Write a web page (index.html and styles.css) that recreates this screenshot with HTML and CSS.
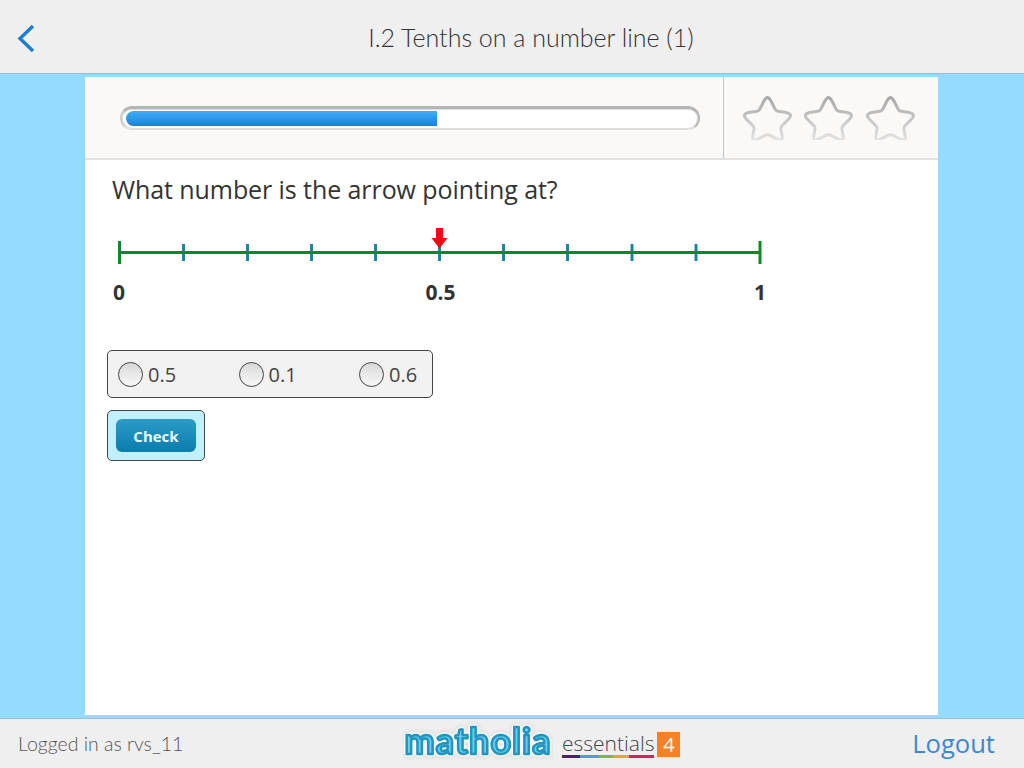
FILE: index.html
```html
<!DOCTYPE html>
<html lang="en">
<head>
    <meta charset="UTF-8">
    <title>I.2 Tenths on a number line (1)</title>
    <link rel="stylesheet" href="styles.css">
</head>
<body>

<header class="topbar">
    <svg class="back" width="20" height="30" viewBox="0 0 20 30">
        <path d="M17 3 L4 15.5 L17 28" fill="none" stroke="#1a7fd4" stroke-width="3.4"/>
    </svg>
    <h1 class="title">I.2 Tenths on a number line (1)</h1>
</header>

<main class="stage">
    <div class="card">
        <div class="status">
            <div class="progress-cell">
                <div class="progress"><div class="progress-fill"></div></div>
            </div>
            <div class="stars">
                <svg class="star" width="52" height="46" viewBox="0 0 52 46"><use href="#star-shape"/></svg>
                <svg class="star" width="52" height="46" viewBox="0 0 52 46"><use href="#star-shape"/></svg>
                <svg class="star" width="52" height="46" viewBox="0 0 52 46"><use href="#star-shape"/></svg>
            </div>
        </div>

        <div class="question">
            <p class="prompt">What number is the arrow pointing at?</p>

            <!-- number line: 0 to 1 in tenths -->
            <svg class="numberline" width="680" height="80" viewBox="0 0 680 80">
                <g stroke="#14899f" stroke-width="3">
                    <path d="M76.5 18v17M140.5 18v17M204.5 18v17M268.5 18v17M332.500 18v17M396.500 18v17M460.500 18v17M525 18v17M589 18v17"/>
                </g>
                <path d="M12.500 26.500H653" stroke="#0a8c22" stroke-width="3"/>
                <path d="M12.500 15v23M653 15v23" stroke="#0a8c22" stroke-width="3"/>
                <path d="M329 2h7v10h4.500l-8 10.500l-8-10.500h4.500z" fill="#ee0b14"/>
                <text class="tick-label" x="12" y="74" text-anchor="middle">0</text>
                <text class="tick-label" x="333.500" y="74" text-anchor="middle">0.5</text>
                <text class="tick-label" x="653" y="74" text-anchor="middle">1</text>
            </svg>

            <div class="choices">
                <label class="choice"><span class="radio"></span>0.5</label>
                <label class="choice"><span class="radio"></span>0.1</label>
                <label class="choice"><span class="radio"></span>0.6</label>
            </div>

            <div class="check-wrap">
                <button class="check">Check</button>
            </div>
        </div>
    </div>
</main>

<footer class="footbar">
    <span class="user">Logged in as rvs_11</span>
    <div class="logo">
        <svg class="matholia" width="150" height="46" viewBox="0 0 150 46">
            <text class="matholia-text" x="75" y="36" text-anchor="middle">matholia</text>
        </svg>
        <span class="essentials">essentials</span>
        <span class="level">4</span>
    </div>
    <a class="logout">Logout</a>
</footer>

<svg width="0" height="0" class="defs">
    <defs>
        <linearGradient id="star-edge" x1="0" y1="0" x2="0" y2="1">
            <stop offset="0" stop-color="#a8a8a8"/>
            <stop offset="1" stop-color="#e2e2e2"/>
        </linearGradient>
        <path id="star-shape" d="M26 3.500c2 0 3 1.500 4.500 4.500l3.500 7c.8 1.500 1.500 2 3 2.200l8 1.300c3 .5 4.500 1.500 4.500 3.200 0 1.300-.8 2.300-2.500 4l-6 6c-1 1-1.300 2-1.100 3.300l1.300 7.500c.4 2.500-.4 3.500-2 3.500-1 0-2-.3-3.500-1.100l-7.300-3.700c-1.300-.7-2.600-.7-3.900 0l-7.300 3.700c-1.500.8-2.500 1.100-3.500 1.100-1.600 0-2.400-1-2-3.500l1.300-7.500c.2-1.300-.1-2.300-1.100-3.300l-6-6c-1.700-1.700-2.500-2.700-2.500-4 0-1.700 1.500-2.700 4.500-3.200l8-1.300c1.500-.2 2.200-.7 3-2.200l3.500-7c1.500-3 2.500-4.500 4.500-4.500z" fill="none" stroke="url(#star-edge)" stroke-width="3"/>
    </defs>
</svg>

</body>
</html>
```

FILE: styles.css
```css
/* page */
html, body {
    height: 100%;
}
body {
    margin: 0;
    height: 768px;
    display: flex;
    flex-direction: column;
    overflow: hidden;
    background-color: #93dbff;
    font-family: "Open Sans", sans-serif;
    color: #333;
}
.defs {
    position: absolute;
}

/* top bar */
.topbar {
    flex: none;
    position: relative;
    height: 73px;
    padding-left: 38px;
    display: flex;
    align-items: center;
    justify-content: center;
    background-color: #efefef;
    border-bottom: 1px solid #9dbccd;
}
.back {
    position: absolute;
    left: 16px;
    top: 23px;
}
.title {
    margin: 0;
    font-family: "Lato", sans-serif;
    font-weight: 300;
    font-size: 25px;
    color: #333;
}

/* card */
.stage {
    flex: 1;
    display: flex;
    justify-content: center;
    padding: 3px 86px 3px 85px;
    min-height: 0;
}
.card {
    flex: 1;
    background-color: #fff;
}
.status {
    display: flex;
    height: 81px;
    background-color: #fbf8f8;
    border-bottom: 2px solid #e2e2e2;
}
.progress-cell {
    flex: 1;
    display: flex;
    align-items: center;
    padding: 0 23px 0 35px;
    border-right: 1px solid #c4c4c4;
}
.progress {
    flex: 1;
    height: 15px;
    padding: 2px 4px 3px 4px;
    border-radius: 12px;
    border: 1px solid #ddd;
    border-top: 3px solid #b5b5b5;
    border-right: 2px solid #b5b5b5;
    border-left: 2px solid #ccc;
    background-color: #fff;
    box-shadow: inset 0 0 0 1px #ddd;
}
.progress-fill {
    width: 54.7%;
    height: 100%;
    border-radius: 8px 0 0 8px;
    background: linear-gradient(#3eb0f5, #1a7fe0);
}
.stars {
    flex: none;
    width: 214px;
    display: flex;
    align-items: center;
    justify-content: center;
    gap: 9.5px;
    padding: 0 6px 2px 0;
    box-sizing: border-box;
}
.star {
    display: block;
}

/* question */
.question {
    padding: 11px 22px;
}
.prompt {
    margin: 0 0 0 5px;
    font-size: 25px;
    letter-spacing: -0.08px;
    line-height: 36px;
    color: #333;
}
.numberline {
    display: block;
    margin-top: 19px;
}
.tick-label {
    font-family: "Open Sans", sans-serif;
    font-weight: 700;
    font-size: 21px;
    fill: #333;
}
.choices {
    display: flex;
    width: 326px;
    height: 48px;
    margin-top: 44px;
    box-sizing: border-box;
    padding: 0 10px;
    align-items: center;
    background-color: #f2f2f2;
    border: 1px solid #444;
    border-radius: 5px;
}
.choice {
    flex: none;
    width: 120.5px;
    display: flex;
    align-items: center;
    gap: 5px;
    font-size: 20px;
    color: #444;
}
.radio {
    width: 23px;
    height: 23px;
    border: 1px solid #444;
    border-radius: 50%;
    background: linear-gradient(#d8d8d8, #f8f8f8);
}
.check-wrap {
    width: 80px;
    margin-top: 12px;
    padding: 8px;
    background-color: #c1effd;
    border: 1px solid #444;
    border-radius: 5px;
}
.check {
    display: block;
    width: 80px;
    height: 33px;
    padding: 0;
    border: 0;
    border-radius: 6px;
    background: linear-gradient(#2a9cc8, #0a7dac);
    color: #eafaff;
    font-family: "Open Sans", sans-serif;
    font-weight: 700;
    font-size: 15px;
}

/* footer */
.footbar {
    flex: none;
    height: 49px;
    display: flex;
    align-items: center;
    justify-content: space-between;
    padding: 0 29px 0 18px;
    background-color: #efefef;
    border-top: 1px solid #9dbccd;
}
.user {
    font-family: "Lato", sans-serif;
    font-weight: 300;
    font-size: 19.5px;
    color: #555;
}
.logo {
    display: flex;
    align-items: center;
    margin-right: 12px;
}
.matholia {
    display: block;
    margin-bottom: 6px;
}
.matholia-text {
    font-family: "Lato", sans-serif;
    font-weight: 700;
    font-size: 36px;
    letter-spacing: 1px;
    fill: #6fcbea;
    stroke: #1f95c2;
    stroke-width: 2.5px;
    stroke-linejoin: round;
    filter: drop-shadow(0 0 1.5px #fff) drop-shadow(0 0 1.5px #fff) drop-shadow(0 0 1px #fff) drop-shadow(0 0 1px #bbb);
}
.essentials {
    margin-left: 9px;
    margin-top: 2px;
    font-weight: 300;
    font-size: 21px;
    line-height: 24px;
    color: #444;
    border-bottom: 3px solid;
    border-image: linear-gradient(90deg, #4b1d7c 0 20%, #4a9fd8 20% 40%, #7bb848 40% 55%, #f0a030 55% 72%, #c8285a 72% 100%) 1;
}
.level {
    width: 23px;
    height: 25px;
    margin-left: 3px;
    margin-top: 2px;
    background-color: #f58229;
    color: #fff;
    font-size: 20px;
    line-height: 25px;
    text-align: center;
}
.logout {
    font-weight: 400;
    font-size: 25.6px;
    color: #3f87d6;
}
```
